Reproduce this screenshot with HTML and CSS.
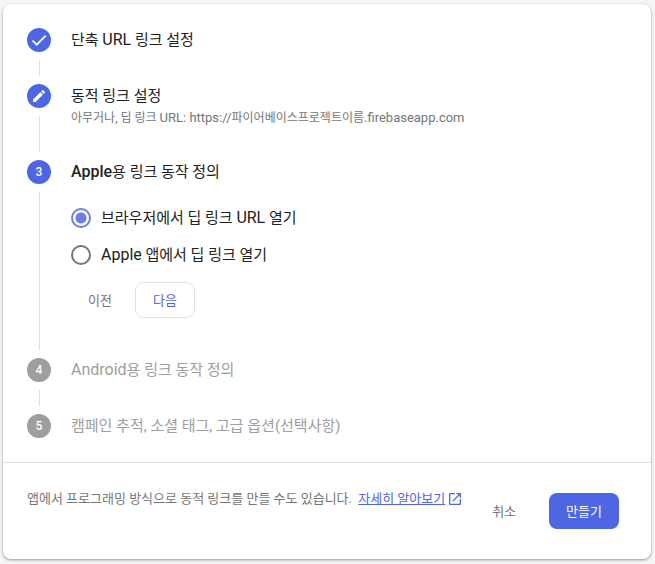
FILE: index.html
```
<!DOCTYPE html>
<html lang="ko">
<head>
    <meta charset="UTF-8">
    <meta name="viewport" content="width=device-width, initial-scale=1.0">
    <title>동적 링크 만들기</title>
    <link rel="stylesheet" href="styles.css">
</head>
<body>

    <form class="card">
        <!-- 단계 목록 -->
        <ol class="steps">
            <li class="step">
                <div class="step-track">
                    <span class="step-icon">
                        <svg width="24" height="24" viewBox="0 0 24 24"><path d="M5.5 12.5l4.2 4.2L18.7 7.7" fill="none" stroke="#fff" stroke-width="1.7"/></svg>
                    </span>
                </div>
                <div class="step-body">
                    <h2 class="step-title">단축 <span class="en">URL</span> 링크 설정</h2>
                </div>
            </li>
            <li class="step">
                <div class="step-track">
                    <span class="step-icon">
                        <svg width="16" height="16" viewBox="0 0 24 24"><path d="M3 17.25V21h3.75L17.81 9.94l-3.75-3.75L3 17.25zM20.71 7.04c.39-.39.39-1.02 0-1.41l-2.34-2.34c-.39-.39-1.02-.39-1.41 0l-1.83 1.83 3.75 3.75 1.83-1.83z" fill="#fff"/></svg>
                    </span>
                </div>
                <div class="step-body">
                    <h2 class="step-title">동적 링크 설정</h2>
                    <p class="step-summary">아무거나, 딥 링크 <span class="en-small">URL: https://</span>파이어베이스프로젝트이름<span class="en-small">.firebaseapp.com</span></p>
                </div>
            </li>
            <li class="step">
                <div class="step-track">
                    <span class="step-icon">3</span>
                </div>
                <div class="step-body step-body-open">
                    <h2 class="step-title current"><span class="en">Apple</span>용 링크 동작 정의</h2>
                    <div class="options">
                        <label class="option"><input type="radio" name="behavior" checked><span>브라우저에서 딥 링크 <span class="en">URL</span> 열기</span></label>
                        <label class="option"><input type="radio" name="behavior"><span><span class="en">Apple</span> 앱에서 딥 링크 열기</span></label>
                    </div>
                    <div class="step-actions">
                        <button type="button" class="btn">이전</button>
                        <button type="button" class="btn btn-outline">다음</button>
                    </div>
                </div>
            </li>
            <li class="step disabled">
                <div class="step-track">
                    <span class="step-icon">4</span>
                </div>
                <div class="step-body">
                    <h2 class="step-title"><span class="en">Android</span>용 링크 동작 정의</h2>
                </div>
            </li>
            <li class="step disabled">
                <div class="step-track">
                    <span class="step-icon">5</span>
                </div>
                <div class="step-body">
                    <h2 class="step-title">캠페인 추적, 소셜 태그, 고급 옵션(선택사항)</h2>
                </div>
            </li>
        </ol>

        <!-- 하단 안내 및 버튼 -->
        <div class="footer">
            <p class="footer-text">앱에서 프로그래밍 방식으로 동적 링크를 만들 수도 있습니다. <a href="#" class="more-link"><span class="more-text">자세히 알아보기</span><svg class="more-icon" width="16" height="16" viewBox="0 0 24 24"><path d="M19 19H5V5h7V3H5c-1.11 0-2 .9-2 2v14c0 1.1.89 2 2 2h14c1.1 0 2-.9 2-2v-7h-2v7zM14 3v2h3.59l-9.83 9.83 1.41 1.41L19 6.41V10h2V3h-7z" fill="currentColor"/></svg></a></p>
            <div class="footer-actions">
                <button type="button" class="btn">취소</button>
                <button type="submit" class="btn btn-primary">만들기</button>
            </div>
        </div>
    </form>

</body>
</html>
```
FILE: styles.css
```
body {
    font-family: Roboto, 'Noto Sans CJK KR', sans-serif;
    background-color: #f5f6f8;
    margin: 0;
    padding: 4px 4px 5px 3px;
    color: #212121;
}

.card {
    background-color: #fff;
    border-radius: 8px;
    box-shadow: 0 1px 3px rgba(0, 0, 0, 0.4);
}

/* 단계 목록 */
.steps {
    list-style: none;
    margin: 0;
    padding: 24px;
}

.step {
    display: flex;
    gap: 20px;
}

.step-track {
    display: flex;
    flex-direction: column;
    align-items: center;
    flex: none;
    width: 24px;
}

.step-icon {
    display: flex;
    align-items: center;
    justify-content: center;
    width: 24px;
    height: 24px;
    border-radius: 50%;
    background-color: #4f66e4;
    color: #fff;
    font-size: 12px;
    font-weight: 500;
}

/* 단계 사이 세로선 */
.step:not(:last-child) .step-track::after {
    content: "";
    flex: 1;
    width: 1px;
    margin: 8px 0;
    background-color: #e0e0e0;
}

.step-body {
    flex: 1;
    padding-bottom: 32px;
}

.step-body-open {
    padding-bottom: 40px;
}

.step:last-child .step-body {
    padding-bottom: 0;
}

.step-title {
    margin: 0;
    font-size: 15px;
    font-weight: 400;
    line-height: 24px;
}

/* 영문은 한글보다 한 단계 크게 */
.en {
    font-size: 16px;
    line-height: 1;
}

.en-small {
    font-size: 13px;
    line-height: 1;
}

.current .en {
    font-weight: 500;
}

.step-summary {
    margin: 0;
    font-size: 12px;
    line-height: 20px;
    color: #757575;
}

.disabled .step-icon {
    background-color: #9e9e9e;
}

.disabled .step-title {
    color: #9e9e9e;
}

/* 라디오 버튼 */
.options {
    margin: 15px 0 9px;
}

.option {
    display: flex;
    align-items: center;
    gap: 10px;
    height: 37px;
    font-size: 15px;
    line-height: 24px;
}

.option input {
    appearance: none;
    box-sizing: border-box;
    width: 20px;
    height: 20px;
    margin: 0;
    border: 2px solid #757575;
    border-radius: 50%;
}

.option input:checked {
    border-color: #6b7fe9;
    background: radial-gradient(circle, #6b7fe9 5px, transparent 6px);
}

/* 버튼 */
.step-actions {
    display: flex;
    gap: 6px;
}

.btn {
    height: 36px;
    padding: 0 17px 2px;
    border: none;
    border-radius: 8px;
    background: none;
    color: #757575;
    font-family: inherit;
    font-size: 13px;
    white-space: nowrap;
    cursor: pointer;
}

.btn-outline {
    border: 1px solid #e0e0e0;
    color: #4f66e4;
}

.btn-primary {
    background-color: #4f66e4;
    color: #fff;
}

/* 하단 영역 */
.footer {
    display: flex;
    justify-content: space-between;
    align-items: flex-start;
    padding: 24px 32px 30px 24px;
    border-top: 1px solid #e0e0e0;
}

.footer-text {
    margin: 0;
    font-size: 13px;
    line-height: 24px;
    color: #757575;
}

.more-link {
    margin-left: 3px;
    color: #4f66e4;
    text-decoration: none;
    white-space: nowrap;
}

.more-text {
    text-decoration: underline;
}

.more-icon {
    margin-left: 2px;
    vertical-align: -4px;
}

.footer-actions {
    display: flex;
    flex: none;
    gap: 16px;
    margin-top: 6px;
}
```
